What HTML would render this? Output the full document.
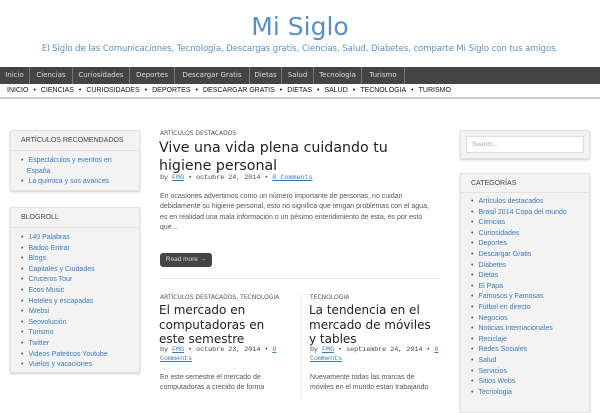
<!DOCTYPE html>
<html><head><meta charset="utf-8"><style>
*{margin:0;padding:0;box-sizing:border-box}
body{width:600px;height:400px;overflow:hidden;background:#fff;font-family:"Liberation Sans",sans-serif;position:relative}
.a{position:absolute}
h1{position:absolute;top:12px;left:0;width:600px;text-align:center;font:normal 25px "DejaVu Sans",sans-serif;color:#5a8fc4}
.tag{top:43px;left:0;width:600px;text-align:center;font:8.4px "DejaVu Sans",sans-serif;color:#5a8fc4;white-space:nowrap}
.nav{top:67px;left:0;width:600px;height:17px;background:#444;display:flex}
.nav span{color:#ddd;font:7px "DejaVu Sans",sans-serif;line-height:17px;border-right:1px solid #777;text-align:center}
.nav2{top:84px;left:0;width:600px;height:15px;border-bottom:2px solid #ccc;font-size:7px;line-height:13px;padding-left:7px;color:#111}
.nav2 b{font-weight:normal;margin:0 5px}
.w{background:#f3f3f3;border:1px solid #e2e2e2;box-shadow:0 1px 2px #ccc}
.wh{font-size:7px;color:#444;padding:6px 10px;border-bottom:1px solid #e2e2e2;height:20px}
ul{list-style:none;padding:5px 0 0 10px}
li{font-size:7px;color:#3b78b8;line-height:10.6px}
li:before{content:"•";color:#555;margin-right:5px}
.cat{font:6px "DejaVu Sans",sans-serif;color:#555}
.t{font-family:"DejaVu Sans",sans-serif;color:#222}
.m{font:6.7px "Liberation Mono",monospace;color:#444}
.m u{color:#3b78b8}
.p{font-size:7px;color:#555;line-height:10.4px;white-space:nowrap}
</style></head><body>
<h1>Mi Siglo</h1>
<div class="a tag">El Siglo de las Comunicaciones, Tecnologia, Descargas gratis, Ciencias, Salud, Diabetes, comparte Mi Siglo con tus amigos.</div>
<div class="a nav"><span style="width:30px">Inicio</span><span style="width:43px">Ciencias</span><span style="width:57px">Curiosidades</span><span style="width:45px">Deportes</span><span style="width:75px">Descargar Gratis</span><span style="width:32px">Dietas</span><span style="width:32px">Salud</span><span style="width:48px">Tecnologia</span><span style="width:43px">Turismo</span></div>
<div class="a nav2">INICIO<b>•</b>CIENCIAS<b>•</b>CURIOSIDADES<b>•</b>DEPORTES<b>•</b>DESCARGAR GRATIS<b>•</b>DIETAS<b>•</b>SALUD<b>•</b>TECNOLOGIA<b>•</b>TURISMO</div>

<div class="a w" style="left:10px;top:130px;width:130px;height:61px"><div class="wh">ARTÍCULOS RECOMENDADOS</div><ul><li>Espectáculos y eventos en<br>&nbsp;&nbsp;&nbsp;España</li><li>La química y sus avances</li></ul></div>
<div class="a w" style="left:10px;top:207px;width:130px;height:166px"><div class="wh">BLOGROLL</div><ul><li>140 Palabras</li><li>Badoo Entrar</li><li>Blogs</li><li>Capitales y Ciudades</li><li>Cruceros Tour</li><li>Ecos Music</li><li>Hoteles y escapadas</li><li>iWebsi</li><li>Seovolución</li><li>Turismo</li><li>Twitter</li><li>Videos Pateticos Youtube</li><li>Vuelos y vacaciones</li></ul></div>

<div class="a cat" style="left:160px;top:130px">ARTÍCULOS DESTACADOS</div>
<div class="a t" style="left:159px;top:139px;font-size:14.2px;line-height:18px;width:280px">Vive una vida plena cuidando tu<br>higiene personal</div>
<div class="a m" style="left:160px;top:174px">by <u>FMG</u> • octubre 24, 2014 • <u>0 Comments</u></div>
<div class="a p" style="left:160px;top:192px">En ocasiones advertimos como un número importante de personas, no cuidan<br>debidamente su higiene personal, esto no significa que tengan problemas con el agua,<br>es en realidad una mala información o un pésimo entendimiento de esta, es por esto<br>que…</div>
<div class="a" style="left:160px;top:253px;width:52px;height:14px;background:#444;border-radius:3px;color:#ddd;font-size:6.5px;line-height:14px;text-align:center">Read more →</div>
<div class="a" style="left:160px;top:278px;width:280px;height:1px;background:#e8e8e8"></div>
<div class="a" style="left:300px;top:293px;width:1px;height:107px;background:#eee"></div>

<div class="a cat" style="left:160px;top:294px">ARTÍCULOS DESTACADOS, TECNOLOGIA</div>
<div class="a t" style="left:159px;top:303px;font-size:12px;width:135px;line-height:14.5px">El mercado en<br>computadoras en<br>este semestre</div>
<div class="a m" style="left:160px;top:346px;width:130px;line-height:9px">by <u>FMG</u> • octubre 23, 2014 • <u>0</u><br><u>Comments</u></div>
<div class="a p" style="left:160px;top:373px">En este semestre el mercado de<br>computadoras a crecido de forma</div>

<div class="a cat" style="left:310px;top:294px">TECNOLOGIA</div>
<div class="a t" style="left:309px;top:303px;font-size:12px;width:135px;line-height:14.5px">La tendencia en el<br>mercado de móviles<br>y tables</div>
<div class="a m" style="left:310px;top:346px;width:135px;line-height:9px">by <u>FMG</u> • septiembre 24, 2014 • <u>0</u><br><u>Comments</u></div>
<div class="a p" style="left:310px;top:373px">Nuevamente todas las marcas de<br>móviles en el mundo estan trabajando</div>

<div class="a w" style="left:460px;top:130px;width:130px;height:29px"><div style="margin:5px;height:17px;background:#fff;border:1px solid #ddd;font-size:6.5px;color:#aaa;padding:4px 5px">Search...</div></div>
<div class="a w" style="left:460px;top:173px;width:130px;height:240px"><div class="wh" style="height:19px">CATEGORÍAS</div><ul style="padding-top:4px"><li>Artículos destacados</li><li>Brasil 2014 Copa del mundo</li><li>Ciencias</li><li>Curiosidades</li><li>Deportes</li><li>Descargar Gratis</li><li>Diabetes</li><li>Dietas</li><li>El Papa</li><li>Famosos y Famosas</li><li>Fútbol en directo</li><li>Negocios</li><li>Noticias Internacionales</li><li>Reciclaje</li><li>Redes Sociales</li><li>Salud</li><li>Servicios</li><li>Sitios Webs</li><li>Tecnologia</li></ul></div>
</body></html>
